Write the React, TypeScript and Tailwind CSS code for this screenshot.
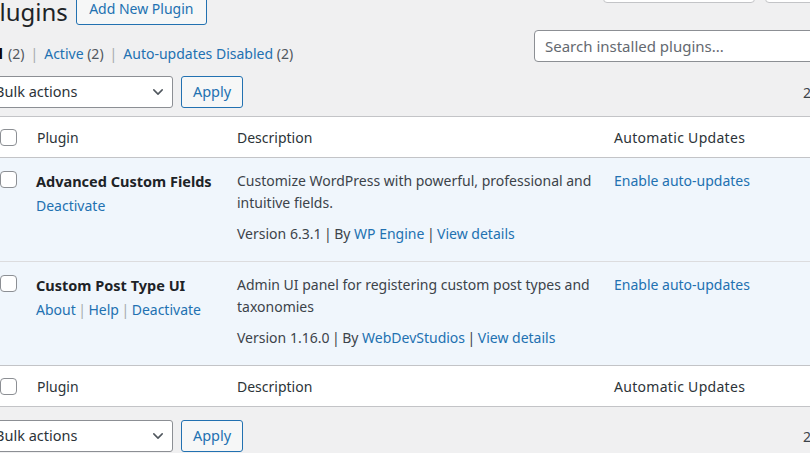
import React from "react";

function Check() {
  return <span className="block w-[17px] h-[17px] bg-white border border-[#8c8f94] rounded-[4px]" />;
}

function BulkRow() {
  return (
    <div className="flex items-center">
      <div className="w-[188px] h-[32px] bg-white border border-[#8c8f94] rounded-[3px] flex items-center justify-between pl-[9px] pr-[7px] text-[#2c3338] text-[14.5px]">
        <span>Bulk actions</span>
        <svg width="14" height="14" viewBox="0 0 20 20" fill="none" stroke="#50575e" strokeWidth="2.2" strokeLinecap="round" strokeLinejoin="round">
          <path d="M4 7l6 6 6-6" />
        </svg>
      </div>
      <div className="ml-[8px] w-[62px] h-[32px] bg-[#f6f7f7] border border-[#2271b1] rounded-[3px] flex items-center justify-center text-[#2271b1] text-[14.5px]">
        Apply
      </div>
      <span className="ml-[560px] text-[14px] text-[#3c434a]">2 items</span>
    </div>
  );
}

function HeaderRow({ border, h }: { border: string; h: string }) {
  return (
    <div className={`grid grid-cols-[44px_200px_377px_1fr] ${h} items-center text-[14px] text-[#2c3338] ${border}`}>
      <div className="pl-[14px]"><Check /></div>
      <div className="pl-[7px]">Plugin</div>
      <div className="pl-[7px]">Description</div>
      <div className="pl-[7px] tracking-[0.3px]">Automatic Updates</div>
    </div>
  );
}

function PluginRow({
  name,
  actions,
  desc,
  version,
  author,
  last,
}: {
  name: string;
  actions: string[];
  desc: string;
  version: string;
  author: string;
  last?: boolean;
}) {
  return (
    <div className={`grid grid-cols-[44px_200px_377px_1fr] h-[104px] bg-[#f0f6fc] text-[14px] border-b ${last ? "border-[#c3c4c7]" : "border-[#dcdcde]"}`}>
      <div className="pl-[14px] pt-[13px]"><Check /></div>
      <div className="pl-[6px] pt-[13px]">
        <div className="leading-[20px] font-bold text-[14.5px] text-[#1d2327]">{name}</div>
        <div className="mt-[5px] leading-[20px] text-[#2271b1]">
          {actions.map((a, i) => (
            <React.Fragment key={a}>
              {i > 0 && <span className="text-[#a7aaad] mx-[2.5px]">|</span>}
              <span>{a}</span>
            </React.Fragment>
          ))}
        </div>
      </div>
      <div className="pl-[7px] pr-[12px] pt-[12px] leading-[22px] text-[#3c434a]">
        <div>{desc}</div>
        <div className="mt-[9px]">
          Version {version}
          <span className="mx-[2.5px]">|</span>
          By <span className="text-[#2271b1]">{author}</span>
          <span className="mx-[2.5px]">|</span>
          <span className="text-[#2271b1]">View details</span>
        </div>
      </div>
      <div className="pl-[7px] pt-[12px] leading-[22px] text-[#2271b1]">Enable auto-updates</div>
    </div>
  );
}

export default function App() {
  return (
    <div className="w-[810px] h-[453px] overflow-hidden bg-[#f0f0f1] text-[#3c434a] font-['Noto_Sans',sans-serif] text-[14px]">
      <div className="ml-[-15px] w-[1000px]">
        <div className="flex gap-[10px] pl-[618px] h-[3px] items-end overflow-hidden">
          <div className="w-[152px] h-[30px] shrink-0 bg-white border border-[#c3c4c7] rounded-b-[4px]" />
          <div className="w-[120px] h-[30px] shrink-0 bg-white border border-[#c3c4c7] rounded-b-[4px]" />
        </div>

        <div className="flex items-start mt-[-11px] h-[33px]">
          <h1 className="text-[24px] leading-[33px] pt-[3px] font-normal text-[#1d2327]">Plugins</h1>
          <div className="ml-[8px] h-[33px] w-[131px] flex items-center justify-center bg-[#f6f7f7] border border-[#2271b1] rounded-[3px] text-[#2271b1] text-[14px]">
            Add New Plugin
          </div>
        </div>

        <div className="flex items-start mt-[5px]">
          <div className="w-[549px] mt-[14px] leading-[20px] text-[14px] text-[#50575e]">
            <span className="font-bold text-[#000]">All</span>
            <span className="ml-[5px]">(2)</span>
            <span className="text-[#a7aaad] mx-[6px]">|</span>
            <span className="text-[#2271b1]">Active <span className="text-[#50575e]">(2)</span></span>
            <span className="text-[#a7aaad] mx-[6px]">|</span>
            <span className="text-[#2271b1]">Auto-updates Disabled <span className="text-[#50575e]">(2)</span></span>
          </div>
          <div className="w-[300px] h-[32px] bg-white border border-[#8c8f94] rounded-[4px] flex items-center px-[10px] text-[15px] text-[#646970]">
            Search installed plugins...
          </div>
        </div>

        <div className="mt-[12px]">
          <BulkRow />
        </div>

        <div className="mt-[8px] bg-white border border-[#c3c4c7] w-[900px]">
          <HeaderRow h="h-[41px]" border="border-b border-[#c3c4c7]" />
          <PluginRow
            name="Advanced Custom Fields"
            actions={["Deactivate"]}
            desc="Customize WordPress with powerful, professional and intuitive fields."
            version="6.3.1"
            author="WP Engine"
          />
          <PluginRow
            name="Custom Post Type UI"
            actions={["About", "Help", "Deactivate"]}
            desc="Admin UI panel for registering custom post types and taxonomies"
            version="1.16.0"
            author="WebDevStudios"
            last
          />
          <HeaderRow h="h-[40px]" border="" />
        </div>

        <div className="mt-[13px]">
          <BulkRow />
        </div>
      </div>
    </div>
  );
}
